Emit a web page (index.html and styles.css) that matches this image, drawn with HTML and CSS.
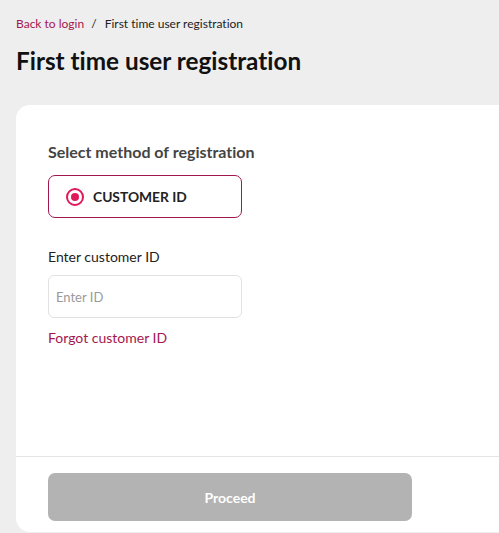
FILE: index.html
```html
<!DOCTYPE html>
<html>
<head>
    <title>First time user registration</title>
    <link rel="stylesheet" href="styles.css">
</head>
<body>
    <div class="crumbs">
        <a href="#" class="back">Back to login</a>
        <span class="sep">/</span>
        <span>First time user registration</span>
    </div>
    <h1 class="title">First time user registration</h1>

    <div class="card">
        <div class="card-body">
            <h3 class="method-title">Select method of registration</h3>
            <label class="option">
                <span class="radio"><span class="dot"></span></span>
                <span class="option-text">CUSTOMER ID</span>
            </label>
            <label for="customerId" class="field-label">Enter customer ID</label>
            <input type="text" id="customerId" class="field" placeholder="Enter ID">
            <a href="#" class="forgot">Forgot customer ID</a>
        </div>
        <div class="card-footer">
            <button class="proceed" disabled>Proceed</button>
        </div>
    </div>
</body>
</html>
```

FILE: styles.css
```css
body {
    margin: 0;
    background-color: #eeeeee;
    font-family: Lato, "Open Sans", sans-serif;
    font-variant-ligatures: none;
    color: #222;
    overflow: hidden;
}
.crumbs {
    padding: 16px 16px 0;
    font-size: 12px;
    line-height: 16px;
    color: #222;
}
.crumbs .back {
    color: #a3174f;
    text-decoration: none;
}
.crumbs .sep {
    margin: 0 5px 0 4px;
}
.title {
    margin: 13px 16px 0;
    font-size: 24.3px;
    line-height: 32px;
    font-weight: 700;
    color: #111;
}
.card {
    margin: 28px 0 0 16px;
    width: 500px;
    height: 427px;
    background-color: #fff;
    border-radius: 14px;
    display: flex;
    flex-direction: column;
}
.card-body {
    flex: 1;
    padding: 36px 32px 0;
    display: flex;
    flex-direction: column;
    align-items: flex-start;
}
.method-title {
    margin: 0;
    font-size: 16px;
    line-height: 22px;
    font-weight: 700;
    color: #444;
}
.option {
    margin-top: 12px;
    box-sizing: border-box;
    width: 194px;
    height: 43px;
    border: 1px solid #a3174f;
    border-radius: 7px;
    display: flex;
    align-items: center;
    padding-left: 17px;
}
.radio {
    box-sizing: border-box;
    width: 18px;
    height: 18px;
    border: 2px solid #e0195b;
    border-radius: 50%;
    display: flex;
    align-items: center;
    justify-content: center;
}
.dot {
    width: 8px;
    height: 8px;
    border-radius: 50%;
    background-color: #e0195b;
}
.option-text {
    margin-left: 9px;
    font-size: 13.8px;
    font-weight: 700;
    color: #222;
}
.field-label {
    margin-top: 29px;
    font-size: 14px;
    line-height: 20px;
    color: #222;
}
.field {
    margin-top: 8px;
    box-sizing: border-box;
    width: 194px;
    height: 43px;
    border: 1px solid #e2e2e2;
    border-radius: 6px;
    padding: 0 7px;
    font-family: Lato, "Open Sans", sans-serif;
    font-size: 13px;
    color: #222;
    outline: none;
}
.field::placeholder {
    color: #9a9a9a;
}
.forgot {
    margin-top: 10px;
    font-size: 14px;
    line-height: 20px;
    color: #a3174f;
    text-decoration: none;
}
.card-footer {
    box-sizing: border-box;
    border-top: 1px solid #e5e5e5;
    padding: 16px 32px 0;
    height: 76px;
}
.proceed {
    width: 364px;
    height: 48px;
    border: none;
    border-radius: 7px;
    background-color: #b3b3b3;
    color: #fff;
    font-family: Lato, "Open Sans", sans-serif;
    font-size: 14px;
    font-weight: 700;
}
```
